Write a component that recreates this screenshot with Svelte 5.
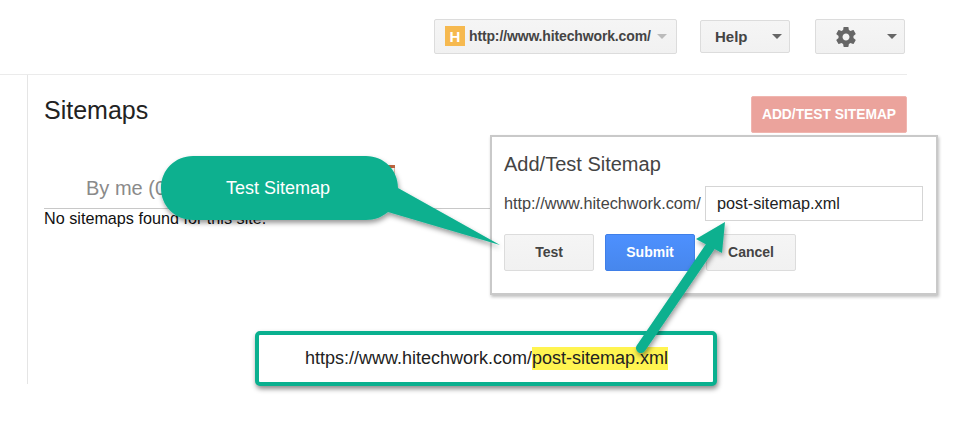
<script>
	const siteUrl = 'http://www.hitechwork.com/';
	const sitemapPath = 'post-sitemap.xml';
</script>

<div class="page">
	<header class="topbar">
		<div class="site-select">
			<span class="favicon">H</span>
			<span class="site-url">{siteUrl}</span>
			<span class="caret light"></span>
		</div>
		<div class="menu-btn help">
			<span>Help</span>
			<span class="caret"></span>
		</div>
		<div class="menu-btn gear">
			<svg width="24" height="24" viewBox="0 0 24 24" aria-hidden="true">
				<path
					fill="#666"
					d="M19.43 12.98c.04-.32.07-.64.07-.98s-.03-.66-.07-.98l2.11-1.65c.19-.15.24-.42.12-.64l-2-3.46c-.12-.22-.39-.3-.61-.22l-2.49 1c-.52-.4-1.08-.73-1.69-.98l-.38-2.65C14.46 2.18 14.25 2 14 2h-4c-.25 0-.46.18-.49.42l-.38 2.65c-.61.25-1.17.59-1.69.98l-2.49-1c-.23-.09-.49 0-.61.22l-2 3.46c-.13.22-.07.49.12.64l2.11 1.65c-.04.32-.07.65-.07.98s.03.66.07.98l-2.11 1.65c-.19.15-.24.42-.12.64l2 3.46c.12.22.39.3.61.22l2.49-1c.52.4 1.08.73 1.69.98l.38 2.65c.03.24.24.42.49.42h4c.25 0 .46-.18.49-.42l.38-2.65c.61-.25 1.17-.59 1.69-.98l2.49 1c.23.09.49 0 .61-.22l2-3.46c.12-.22.07-.49-.12-.64l-2.11-1.65zM12 15.5c-1.93 0-3.5-1.57-3.5-3.5s1.57-3.5 3.5-3.5 3.5 1.57 3.5 3.5-1.57 3.5-3.5 3.5z"
				/>
			</svg>
			<span class="caret"></span>
		</div>
	</header>

	<main class="content">
		<div class="title-row">
			<h1>Sitemaps</h1>
			<button class="add-btn">ADD/TEST SITEMAP</button>
		</div>
		<div class="tabs">
			<span class="tab">By me (0)</span>
		</div>
		<p class="empty">No sitemaps found for this site.</p>
	</main>

	<section class="dialog">
		<h2>Add/Test Sitemap</h2>
		<div class="path-row">
			<span class="prefix">{siteUrl}</span>
			<div class="path-input">{sitemapPath}</div>
		</div>
		<div class="actions">
			<button class="btn">Test</button>
			<button class="btn primary">Submit</button>
			<button class="btn">Cancel</button>
		</div>
	</section>

	<div class="url-box">
		<span>https://www.hitechwork.com/<mark>post-sitemap.xml</mark></span>
	</div>

	<!-- annotations drawn over the screenshot -->
	<svg class="arrows" width="955" height="437" viewBox="0 0 955 437" aria-hidden="true">
		<defs>
			<filter id="drop" x="-20%" y="-20%" width="140%" height="150%">
				<feDropShadow dx="1" dy="3" stdDeviation="2.5" flood-color="#000" flood-opacity="0.4" />
			</filter>
		</defs>
		<path class="orange" d="M387 165H395V168H387Z" />
		<path class="tan" d="M394.500 168V178" />
		<path
			class="teal"
			filter="url(#drop)"
			d="M193 156H366C384 156 398 170 398 188L500 245L388 212C382 217 375 220 366 220H193C175 220 161 206 161 188C161 170 175 156 193 156Z"
		/>
		<g filter="url(#drop)">
			<path class="shaft" d="M641 348L710 247" />
			<path class="teal" d="M725 222L696 239L722 253Z" />
		</g>
	</svg>

	<div class="callout">Test Sitemap</div>
</div>

<style>
	:global(body) {
		margin: 0;
		background: #fff;
	}

	.page {
		position: relative;
		width: 955px;
		height: 437px;
		overflow: hidden;
		font-family: 'Liberation Sans', Arial, sans-serif;
		color: #222;
	}

	.topbar {
		display: flex;
		align-items: center;
		justify-content: flex-end;
		width: 907px;
		height: 75px;
		box-sizing: border-box;
		padding: 0 2px 1px 0;
		border-bottom: 1px solid #ebebeb;
	}

	.site-select,
	.menu-btn {
		display: flex;
		align-items: center;
		box-sizing: border-box;
		background: linear-gradient(#f5f5f5, #f1f1f1);
		border: 1px solid #dcdcdc;
		border-radius: 2px;
		font-weight: 700;
		color: #444;
	}

	.site-select {
		width: 243px;
		height: 35px;
		margin-top: -1px;
		padding-left: 10px;
	}

	.favicon {
		display: flex;
		align-items: center;
		justify-content: center;
		width: 20px;
		height: 20px;
		margin-right: 4px;
		background: #f6b94f;
		color: #fff;
		font-family: 'Liberation Sans', sans-serif;
		font-size: 15px;
		font-weight: 700;
	}

	.site-url {
		font-size: 14px;
		letter-spacing: -0.01em;
	}

	.caret {
		width: 0;
		height: 0;
		margin-left: auto;
		margin-right: 7px;
		border-left: 5px solid transparent;
		border-right: 5px solid transparent;
		border-top: 5px solid #666;
	}

	.caret.light {
		margin-left: 6px;
		border-top-color: #bbb;
	}

	.menu-btn {
		width: 90px;
		height: 33px;
		font-size: 15px;
	}

	.help {
		margin-left: 23px;
		padding-left: 14px;
	}

	.gear {
		height: 35px;
		margin-left: 25px;
		padding-left: 18px;
	}

	.content {
		width: 880px;
		height: 309px;
		margin-left: 27px;
		padding-left: 16px;
		box-sizing: border-box;
		border-left: 1px solid #e5e5e5;
	}

	.title-row {
		display: flex;
		justify-content: space-between;
		align-items: flex-start;
		height: 74px;
		padding-top: 21px;
		box-sizing: border-box;
	}

	h1 {
		margin: 0;
		font-size: 25px;
		font-weight: 400;
		line-height: 28px;
		color: #222;
	}

	.add-btn {
		width: 156px;
		height: 37px;
		padding: 0;
		background: #eba39c;
		border: 1px solid #f0b5af;
		border-radius: 2px;
		box-shadow: inset 0 0 0 1px #eba39c;
		color: #fff;
		font: 700 13.8px 'Liberation Sans', Arial, sans-serif;
	}

	.tabs {
		width: 446px;
		height: 60px;
		box-sizing: border-box;
		padding: 27px 0 0 42px;
		border-bottom: 1px solid #c8c8c8;
	}

	.tab {
		font-size: 20px;
		line-height: 24px;
		color: #8a8a8a;
	}

	.empty {
		margin: 0;
		font-size: 16.2px;
		line-height: 19px;
		color: #111;
	}

	.dialog {
		position: absolute;
		left: 490px;
		top: 135px;
		width: 448px;
		height: 160px;
		box-sizing: border-box;
		padding: 0 12px;
		background: #fff;
		border: 2px solid #c9c9c9;
		box-shadow: 1px 2px 3px rgba(0, 0, 0, 0.25);
	}

	h2 {
		margin: 0;
		padding-top: 15px;
		font-size: 20px;
		font-weight: 400;
		line-height: 24px;
		color: #444;
	}

	.path-row {
		display: flex;
		align-items: center;
		margin-top: 10px;
	}

	.prefix {
		width: 201px;
		flex: none;
		font-size: 16.25px;
		color: #444;
	}

	.path-input {
		flex: none;
		width: 218px;
		height: 35px;
		box-sizing: border-box;
		padding-left: 11px;
		border: 1px solid #d5d5d5;
		font-size: 16.25px;
		line-height: 33px;
		color: #222;
	}

	.actions {
		display: flex;
		gap: 11px;
		margin-top: 13px;
	}

	.btn {
		width: 90px;
		height: 37px;
		padding: 0 0 2px;
		background: linear-gradient(#f5f5f5, #f1f1f1);
		border: 1px solid #dcdcdc;
		border-radius: 2px;
		color: #444;
		font: 700 14px 'Liberation Sans', Arial, sans-serif;
	}

	.btn.primary {
		background: linear-gradient(#4d90fe, #4787ed);
		border-color: #3f7fe8;
		color: #fff;
	}

	.arrows {
		position: absolute;
		left: 0;
		top: 0;
	}

	.orange {
		fill: #c0653f;
	}

	.tan {
		stroke: #d9c4b0;
		stroke-width: 1px;
	}

	.teal {
		fill: #0ab08f;
	}

	.shaft {
		fill: none;
		stroke: #0ab08f;
		stroke-width: 10px;
		stroke-linecap: round;
	}

	.callout {
		position: absolute;
		left: 161px;
		top: 156px;
		width: 234px;
		height: 64px;
		display: flex;
		align-items: center;
		justify-content: center;
		color: #fff;
		font-size: 18px;
	}

	.url-box {
		position: absolute;
		left: 255px;
		top: 331px;
		width: 462px;
		height: 55px;
		box-sizing: border-box;
		display: flex;
		align-items: center;
		justify-content: center;
		background: #fff;
		border: 4px solid #0ab08f;
		border-radius: 5px;
		box-shadow: 1px 3px 5px rgba(0, 0, 0, 0.45);
		font-size: 18px;
		color: #222;
		padding-left: 1px;
	}

	mark {
		background: #fff450;
		color: #222;
		padding: 1px 0 2px;
	}
</style>
